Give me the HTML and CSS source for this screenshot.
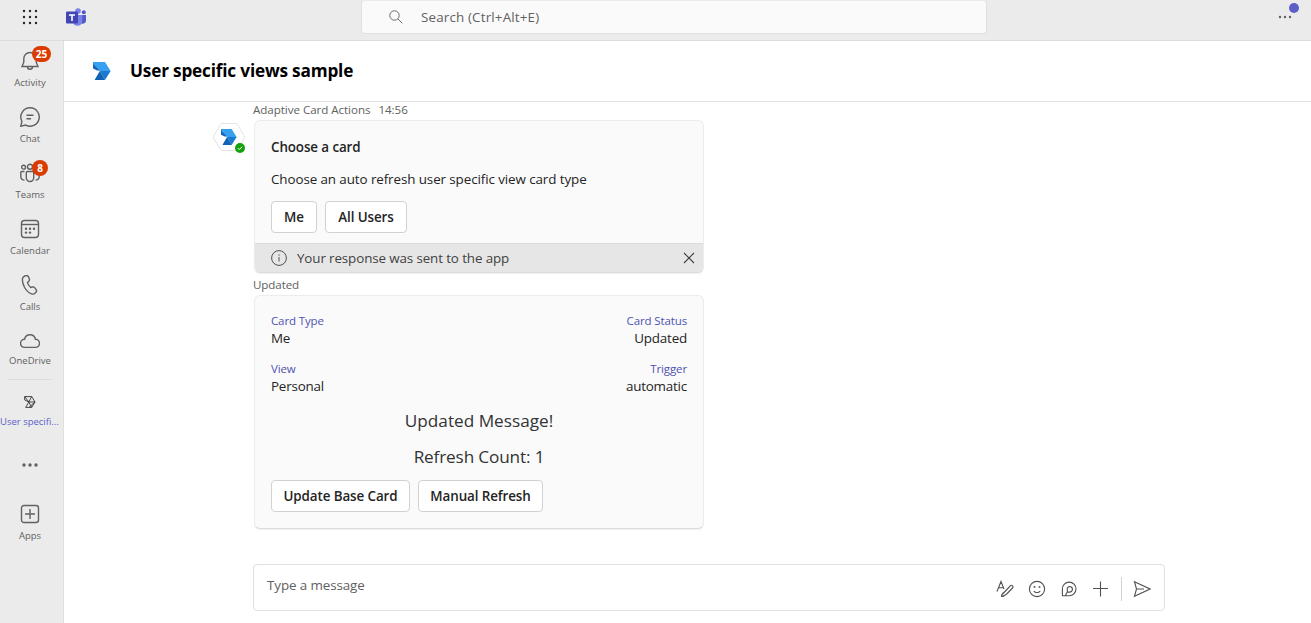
FILE: index.html
```html
<!DOCTYPE html>
<html lang="en">
<head>
<meta charset="utf-8">
<title>User specific views sample</title>
<link rel="stylesheet" href="styles.css">
</head>
<body>
<svg class="defs" width="0" height="0">
  <defs>
    <symbol id="app-logo" viewBox="0 0 18 18">
      <path fill="#37a0f1" d="M0 0h12L17.600 9H6.800L0 1.500z"/>
      <path fill="#1466b8" d="M0 1.500v5L4.200 8.500H6.800z"/>
      <path fill="#1a7ad2" d="M6.800 9h10.800L12 18z"/>
      <path fill="#1062b3" d="M6.800 9L1.600 18H12z"/>
    </symbol>
  </defs>
</svg>
<div class="app">
  <header class="topbar">
    <svg class="waffle" width="16" height="16" viewBox="0 0 16 16" fill="#242424">
      <circle cx="2" cy="2" r="1.200"/><circle cx="8" cy="2" r="1.200"/><circle cx="14" cy="2" r="1.200"/>
      <circle cx="2" cy="8" r="1.200"/><circle cx="8" cy="8" r="1.200"/><circle cx="14" cy="8" r="1.200"/>
      <circle cx="2" cy="14" r="1.200"/><circle cx="8" cy="14" r="1.200"/><circle cx="14" cy="14" r="1.200"/>
    </svg>
    <svg class="teams-logo" width="20" height="19" viewBox="0 0 20 19">
      <circle cx="17.800" cy="4.200" r="2" fill="#5059c9"/>
      <path d="M14 7h6v5.500a3.300 3.300 0 0 1-5 2.800z" fill="#5059c9"/>
      <circle cx="12" cy="3" r="2.800" fill="#7b83eb"/>
      <path d="M7 7h9.300v6.200a4.800 4.800 0 0 1-9.300 1.400z" fill="#7b83eb"/>
      <rect x="0" y="3.500" width="12" height="12" rx="1" fill="#4047b5"/>
      <path d="M3 7h6M6 7v6" stroke="#fff" stroke-width="1.600" fill="none"/>
    </svg>
    <div class="search">
      <svg width="14" height="14" viewBox="0 0 14 14" fill="none" stroke="#6a6a6a"><circle cx="5.500" cy="5.500" r="4.700"/><path d="M9 9l4.300 4.300"/></svg>
      <span class="search-text">Search (Ctrl+Alt+E)</span>
    </div>
    <div class="more">
      <svg width="14" height="4" viewBox="0 0 14 4" fill="#616161"><circle cx="2" cy="2" r="1.200"/><circle cx="7" cy="2" r="1.200"/><circle cx="12" cy="2" r="1.200"/></svg>
      <span class="more-dot"></span>
    </div>
  </header>
  <div class="workspace">
    <nav class="rail">
      <div class="rail-item">
        <svg class="icon" viewBox="0 0 20 20"><path d="M10 1.500a6.200 6.200 0 0 0-6.200 6.200v3.500L2 15.500h16l-1.800-4.300V7.700A6.200 6.200 0 0 0 10 1.500zM7.500 15.800a2.500 2.500 0 0 0 5 0"/></svg>
        <span class="badge badge-wide">25</span>
        <span class="label">Activity</span>
      </div>
      <div class="rail-item">
        <svg class="icon" viewBox="0 0 20 20"><path d="M10 .8a9.200 9.200 0 1 1-4.300 17.300L.8 19.200l1.100-4.900A9.200 9.200 0 0 1 10 .8zM6.500 8.200h7M6.500 11.700h4.500"/></svg>
        <span class="label">Chat</span>
      </div>
      <div class="rail-item">
        <svg class="icon" viewBox="0 0 20 20"><circle cx="3.600" cy="4.200" r="1.900"/><circle cx="10" cy="3.700" r="2.500"/><circle cx="16.400" cy="4.200" r="1.900"/><path d="M7.500 8.500h5q1.200 0 1.200 1.200v5.100a3.700 3.700 0 0 1-7.400 0V9.700q0-1.200 1.200-1.200zM4.500 8.500H2Q.8 8.500.8 9.700v4A3.500 3.500 0 0 0 4.500 17.100M15.500 8.500H18q1.200 0 1.200 1.200v4a3.500 3.500 0 0 1-3.700 3.400"/></svg>
        <span class="badge">8</span>
        <span class="label">Teams</span>
      </div>
      <div class="rail-item">
        <svg class="icon" viewBox="0 0 20 20"><rect x="1.500" y="1.500" width="17" height="17" rx="3"/><path d="M1.500 5.500h17"/><g class="dots"><circle cx="6" cy="9.700" r="1.200"/><circle cx="10" cy="9.700" r="1.200"/><circle cx="14" cy="9.700" r="1.200"/><circle cx="6" cy="13.600" r="1.200"/><circle cx="10" cy="13.600" r="1.200"/></g></svg>
        <span class="label">Calendar</span>
      </div>
      <div class="rail-item">
        <svg class="icon" viewBox="0 0 20 20"><path d="M4.700 1L6 .6q1.700-.3 2.400 1.200l.9 2q.5 1.400-.5 2.400L7.500 7.500q.4 2.400 3.200 5l1.800-.5q1.400-.4 2.300.8l1.300 1.800q1 1.500-.2 2.700l-.9.9q-1.400 1.300-3.400.7Q7.500 17.500 4.600 12.500 1.900 7.500 2.500 3.600 2.900 1.600 4.700 1z"/></svg>
        <span class="label">Calls</span>
      </div>
      <div class="rail-item rail-item-onedrive">
        <svg class="icon" viewBox="0 0 20 20"><path d="M4.600 8.200A5.500 5.500 0 0 1 15.400 8.200 4.100 4.100 0 0 1 15.400 16.400H4.600A4.100 4.100 0 0 1 4.600 8.200z"/></svg>
        <span class="label">OneDrive</span>
      </div>
      <div class="rail-item rail-item-custom">
        <svg class="custom-icon" width="12" height="12" viewBox="0 0 12 12"><path d="M.7.6h7L11 6 7.700 11.400h-6L4.800 6 .7 4zM.7.6L4.800 6H11L5 11.400M7.700.6L4.800 6l2.900 5.400"/></svg>
        <span class="label label-custom">User specifi...</span>
      </div>
      <svg class="rail-more" width="16" height="4" viewBox="0 0 16 4"><circle cx="2" cy="2" r="1.700"/><circle cx="8" cy="2" r="1.700"/><circle cx="14" cy="2" r="1.700"/></svg>
      <div class="rail-item rail-item-apps">
        <svg class="icon" viewBox="0 0 20 20"><rect x="1.500" y="1.500" width="17" height="17" rx="2.500"/><path d="M10 5v10M5 10h10"/></svg>
        <span class="label">Apps</span>
      </div>
    </nav>
    <main class="main">
      <div class="chat-header">
        <svg width="18" height="18"><use href="#app-logo"/></svg>
        <h1 class="chat-title">User specific views sample</h1>
      </div>
      <div class="chat">
        <div class="message">
          <div class="meta"><span class="author">Adaptive Card Actions</span><span class="time">14:56</span></div>
          <div class="avatar">
            <svg width="32" height="28" viewBox="0 0 32 28"><path d="M9 .5h14q1 0 1.500 1L31 12.500q.6 1.500 0 3L24.500 26.500q-.5 1-1.500 1H9q-1 0-1.500-1L1 15.500q-.6-1.500 0-3L7.500 1.500Q8 .5 9 .5z" fill="#fff" stroke="#e3e3e3"/><use href="#app-logo" x="8" y="6" width="16" height="16"/></svg>
            <svg class="presence" width="10" height="10" viewBox="0 0 10 10"><circle cx="5" cy="5" r="5" fill="#13a10e"/><path d="M2.800 5.100l1.500 1.500 2.900-2.900" fill="none" stroke="#fff"/></svg>
          </div>
          <section class="card">
            <div class="card-body">
              <h2 class="card-title">Choose a card</h2>
              <p class="card-text">Choose an auto refresh user specific view card type</p>
              <div class="actions"><button class="btn btn-me">Me</button><button class="btn btn-all">All Users</button></div>
            </div>
            <div class="notice">
              <svg width="16" height="16" viewBox="0 0 16 16" fill="none" stroke="#505050"><circle cx="8" cy="8" r="7.400"/><path d="M8 7v4.500M8 4.300v1.400"/></svg>
              <span class="notice-text">Your response was sent to the app</span>
              <svg class="close" width="12" height="12" viewBox="0 0 12 12" fill="none" stroke="#424242" stroke-width="1.100"><path d="M1 1l10 10M11 1L1 11"/></svg>
            </div>
          </section>
        </div>
        <div class="updated">Updated</div>
        <section class="card card-status">
          <div class="fact-row">
            <div class="fact"><span class="fact-name">Card Type</span><span class="fact-value">Me</span></div>
            <div class="fact fact-right"><span class="fact-name">Card Status</span><span class="fact-value">Updated</span></div>
          </div>
          <div class="fact-row">
            <div class="fact"><span class="fact-name">View</span><span class="fact-value">Personal</span></div>
            <div class="fact fact-right"><span class="fact-name">Trigger</span><span class="fact-value">automatic</span></div>
          </div>
          <p class="big">Updated Message!</p>
          <p class="big big-count">Refresh Count: 1</p>
          <div class="actions"><button class="btn btn-update">Update Base Card</button><button class="btn btn-manual">Manual Refresh</button></div>
        </section>
        <div class="composer">
          <span class="placeholder">Type a message</span>
          <div class="tools">
            <svg width="18" height="18" viewBox="0 0 18 18"><path d="M1 11.500L5 1.500l3 7.500M2.500 7.800h5M8.500 12l5.800-6.200a1.500 1.500 0 0 1 2.200 2.200L10.700 14 7 16.500l-1.500-.2.300-1.500zM8.500 12l-2.300 1.600M6 16.500l2-1"/></svg>
            <svg width="18" height="18" viewBox="0 0 18 18"><circle cx="9" cy="9" r="7.600"/><path d="M5.800 11.200a4 4 0 0 0 6.400 0"/><g class="dots"><circle cx="6.500" cy="7" r="1"/><circle cx="11.500" cy="7" r="1"/></g></svg>
            <svg width="18" height="18" viewBox="0 0 18 18"><path d="M2.400 15.700V9A6.800 6.800 0 1 1 9 15.700zM5.500 15.500q.5-1.800 1.800-3.300V8.200a2.700 2.700 0 1 1 2.300 3.900H7.300"/></svg>
            <svg width="18" height="18" viewBox="0 0 18 18"><path d="M8.500 1.500v15M1 8.500h15"/></svg>
            <span class="tool-divider"></span>
            <svg width="18" height="18" viewBox="0 0 18 18"><path d="M1.500 1.700L17 9 1.500 16.300 3.500 9zM3.500 9h7.500"/></svg>
          </div>
        </div>
      </div>
    </main>
  </div>
</div>
</body>
</html>
```
FILE: styles.css
```css
* { box-sizing: border-box; }
body, h1, h2, p { margin: 0; }
body { font-family: "Open Sans", "Noto Sans", sans-serif; font-size: 13.4px; color: #242424; background: #fff; overflow: hidden; }
.defs { display: block; }
svg { flex: none; display: block; }
span, p, h1, h2, button { white-space: nowrap; }
.app { height: 623px; display: flex; flex-direction: column; }
.topbar { height: 41px; flex: none; display: flex; align-items: flex-start; background: #ebebeb; border-bottom: 1px solid #dcdcdc; }
.waffle { margin: 9px 0 0 22px; }
.teams-logo { margin: 8px 0 0 28px; }
.search { margin-left: 275px; width: 626px; height: 34px; display: flex; align-items: center; gap: 18px; padding-left: 27px; background: #fafafa; border: 1px solid #e0e0e0; border-top-color: #ebebeb; border-radius: 4px; color: #616161; }
.search-text { letter-spacing: .16px; }
.more { position: relative; margin: 15px 0 0 291px; }
.more-dot { position: absolute; left: 11px; top: -12px; width: 10px; height: 10px; border-radius: 50%; background: #5b5fc7; }
.workspace { flex: 1; display: flex; min-height: 0; }
.rail { width: 64px; flex: none; background: #ebebeb; border-right: 1px solid #dfdfdf; padding: 10px 3px 0 0; display: flex; flex-direction: column; align-items: center; }
.rail-item { position: relative; width: 60px; height: 56px; display: flex; flex-direction: column; align-items: center; gap: 6px; color: #616161; }
.icon { width: 20px; height: 20px; fill: none; stroke: #616161; stroke-width: 1.4; }
.dots { fill: #616161; stroke: none; }
.label { font-size: 9.5px; line-height: 12px; }
.badge { position: absolute; left: 32px; top: -3px; width: 16px; height: 16px; border-radius: 8px; background: #da3b01; color: #fff; font-size: 10px; font-weight: 700; line-height: 16px; text-align: center; }
.badge-wide { width: 19px; top: -5px; }
.rail-item-onedrive { height: 49px; gap: 4px; }
.rail-item-custom { height: 78px; gap: 8px; padding-top: 16px; }
.rail-item-custom::before { content: ""; position: absolute; top: -1px; left: 8px; width: 44px; height: 1px; background: #dcdcdc; }
.custom-icon { fill: none; stroke: #333; stroke-width: .9; }
.label-custom { color: #5b5fc7; align-self: flex-start; }
.rail-more { fill: #616161; margin-top: 5px; }
.rail-item-apps { margin-top: 37px; }
.main { flex: 1; display: flex; flex-direction: column; }
.chat-header { height: 61px; flex: none; display: flex; align-items: center; gap: 19px; padding-left: 29px; border-bottom: 1px solid #e0e0e0; }
.chat-title { font-size: 17.2px; font-weight: 700; color: #000; letter-spacing: -.18px; padding-bottom: 2px; }
.chat { padding-left: 189px; width: 1101px; display: flex; flex-direction: column; }
.message { display: grid; grid-template-columns: 450px; position: relative; }
.meta { height: 18px; display: flex; gap: 8px; line-height: 16px; font-size: 11.6px; letter-spacing: -.05px; color: #616161; }
.avatar { position: absolute; left: -40px; top: 21px; }
.presence { position: absolute; left: 22px; top: 20px; }
.card { width: 450px; margin-left: 1px; background: #fafafa; border: 1px solid #ececec; border-bottom-color: #dcdcdc; border-radius: 6px; overflow: hidden; box-shadow: 0 1px 1px #00000010; }
.card-body { height: 122px; padding: 16px; }
.card-title { font-size: 13.4px; line-height: 20px; font-weight: 600; letter-spacing: -.1px; }
.card-text { line-height: 20px; margin-top: 12px; letter-spacing: -.09px; }
.actions { display: flex; gap: 8px; }
.card-body .actions { margin-top: 12px; }
.btn { height: 32px; padding: 0; font: 600 13.4px "Open Sans", sans-serif; letter-spacing: -.1px; color: #242424; background: #fff; border: 1px solid #d1d1d1; border-radius: 4px; }
.btn-me { width: 46px; }
.btn-all { width: 82px; }
.btn-update { width: 139px; }
.btn-manual { width: 125px; }
.notice { height: 29px; display: flex; align-items: center; gap: 10px; padding: 0 8px 0 16px; background: #e6e6e6; border-top: 1px solid #dcdcdc; color: #424242; }
.notice-text { letter-spacing: -.12px; padding-bottom: 1px; }
.close { margin-left: auto; }
.updated { height: 22px; line-height: 24px; font-size: 11.6px; letter-spacing: -.1px; color: #616161; }
.card-status { height: 234px; padding: 16px 16px 0; }
.fact-row { display: flex; justify-content: space-between; height: 48px; }
.fact { display: flex; flex-direction: column; }
.fact-right { align-items: flex-end; }
.fact-name { font-size: 11.5px; line-height: 18px; letter-spacing: -.12px; color: #4f52b2; }
.fact-value { line-height: 16px; letter-spacing: -.2px; }
.big { font-size: 17.2px; line-height: 24px; text-align: center; margin-bottom: 12px; color: #333; }
.fact-row + .big { margin-top: 1px; }
.big-count { letter-spacing: -.15px; }
.card-status .actions { margin-top: -1px; }
.composer { margin-top: 35px; width: 912px; height: 47px; display: flex; justify-content: space-between; border: 1px solid #e0e0e0; border-radius: 4px; padding: 0 13px; color: #616161; }
.placeholder { line-height: 41px; letter-spacing: -.1px; }
.tools { display: flex; align-items: center; gap: 14px; padding-top: 2px; }
.tools svg { fill: none; stroke: #505050; stroke-width: 1.1; }
.tool-divider { width: 1px; height: 24px; background: #d1d1d1; margin: 0 -3px; }
```
